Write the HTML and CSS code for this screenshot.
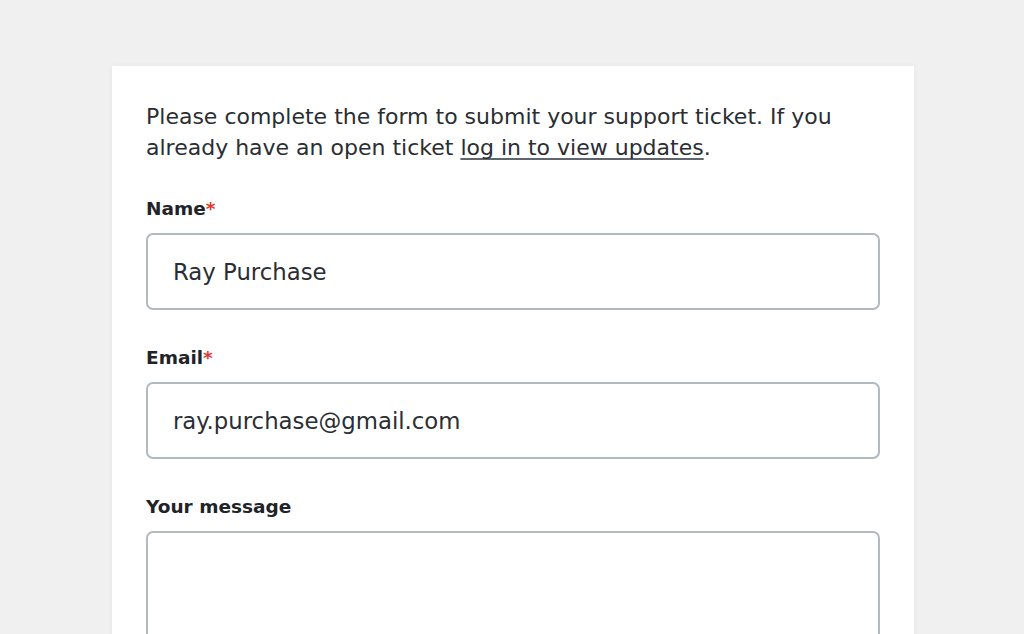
FILE: index.html
```html
<!DOCTYPE html>
<html lang="en">
<head>
<meta charset="utf-8">
<title>Support ticket</title>
<link rel="stylesheet" href="styles.css">
</head>
<body>
<main class="card">
  <p class="intro">Please complete the form to submit your support ticket. If you already have an open ticket <a href="#" class="link">log in to view updates</a>.</p>
  <div class="field">
    <label class="label" for="name">Name<span class="req">*</span></label>
    <input class="input" id="name" type="text" value="Ray Purchase">
  </div>
  <div class="field">
    <label class="label" for="email">Email<span class="req">*</span></label>
    <input class="input" id="email" type="text" value="ray.purchase@gmail.com">
  </div>
  <div class="field">
    <label class="label" for="msg">Your message</label>
    <textarea class="textarea" id="msg"></textarea>
  </div>
</main>
</body>
</html>
```
FILE: styles.css
```css
html, body {
  margin: 0;
  padding: 0;
  background: #f0f0f0;
  font-family: "DejaVu Sans", "Noto Sans", sans-serif;
  color: #2a2e33;
}
.card {
  margin: 66px 0 0 112px;
  width: 802px;
  box-sizing: border-box;
  padding: 35px 34px 40px;
  background: #ffffff;
  box-shadow: 0 0 6px rgba(0, 0, 0, 0.05);
}
.intro {
  margin: 0 0 32px;
  font-size: 22px;
  line-height: 31px;
  color: #2a2e33;
}
.link {
  color: inherit;
  text-decoration: underline;
  text-decoration-color: #5f656c;
  text-decoration-skip-ink: none;
  text-underline-offset: 3px;
  text-decoration-thickness: 1.5px;
}
.field {
  display: flex;
  flex-direction: column;
  margin-bottom: 34px;
}
.label {
  font-size: 18.5px;
  line-height: 26px;
  font-weight: 700;
  color: #1f2428;
  padding-top: 1px;
  margin-bottom: 11px;
}
.req {
  color: #e0382f;
}
.input, .textarea {
  box-sizing: border-box;
  width: 100%;
  height: 77px;
  padding: 0 25px;
  border: 2px solid #b1b9c1;
  border-radius: 7px;
  font-family: inherit;
  font-size: 22.8px;
  color: #2a2e33;
  background: #fff;
  outline: none;
}
.textarea {
  height: 160px;
  resize: none;
}
```
